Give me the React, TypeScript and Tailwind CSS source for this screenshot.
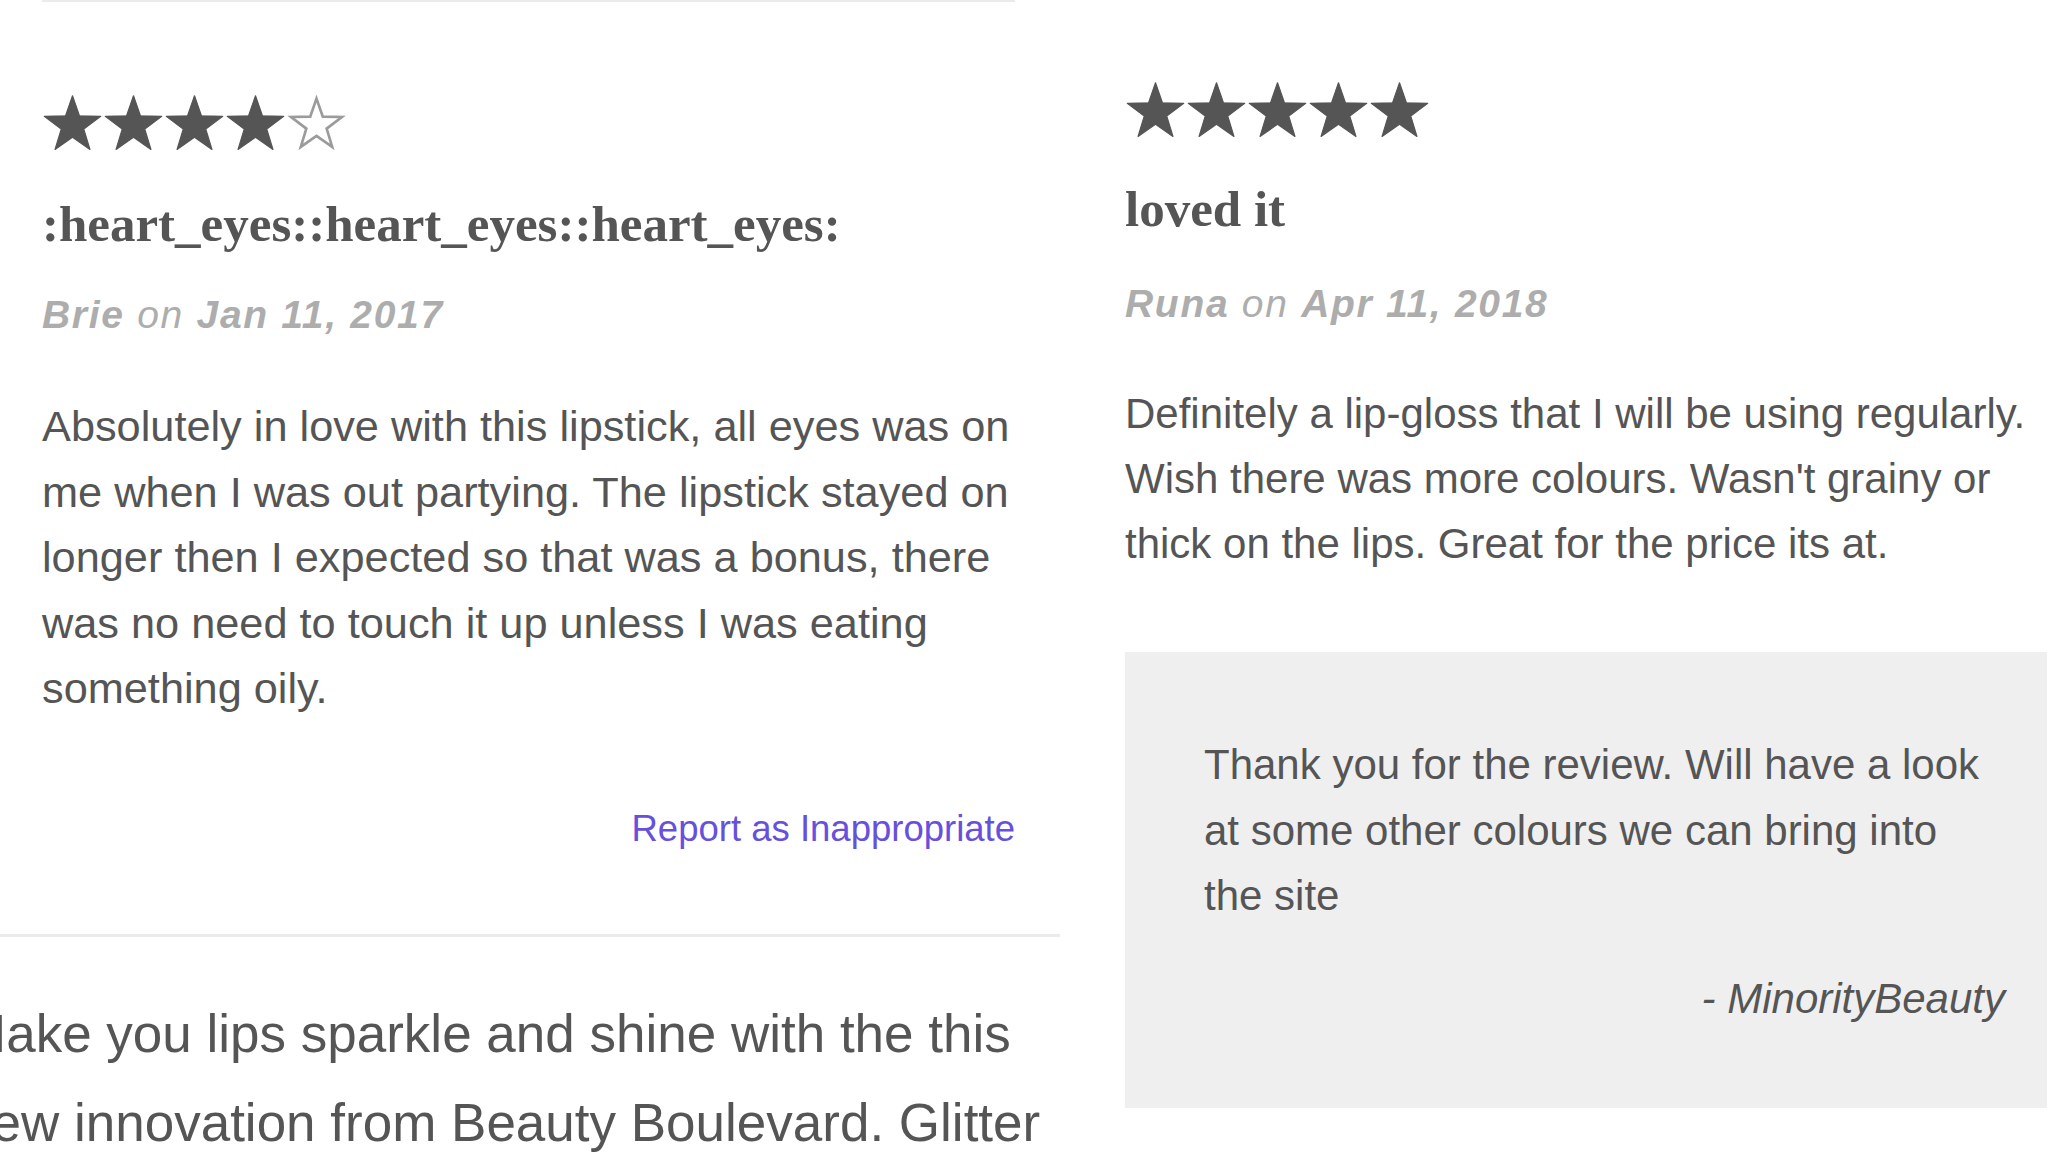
import React from "react"

// Product review listing, two review columns side by side
type Review = {
  id: number
  rating: number
  title: string
  author: string
  date: string
  body: string
}

const reviews: Review[] = [
  {
    id: 1,
    rating: 4,
    title: ":heart_eyes::heart_eyes::heart_eyes:",
    author: "Brie",
    date: "Jan 11, 2017",
    body: "Absolutely in love with this lipstick, all eyes was on me when I was out partying. The lipstick stayed on longer then I expected so that was a bonus, there was no need to touch it up unless I was eating something oily.",
  },
  {
    id: 2,
    rating: 5,
    title: "loved it",
    author: "Runa",
    date: "Apr 11, 2018",
    body: "Definitely a lip-gloss that I will be using regularly. Wish there was more colours. Wasn't grainy or thick on the lips. Great for the price its at.",
  },
]

const STAR = "50,3 61.76,36.82 97.55,37.55 69.02,59.18 79.39,93.45 50,73 20.61,93.45 30.98,59.18 2.45,37.55 38.24,36.82"

function Star({ filled }: { filled: boolean }) {
  return (
    <svg viewBox="0 0 100 96" className="w-[61px] h-[57px] shrink-0">
      {filled ? (
        <polygon points={STAR} fill="#555555" stroke="#555555" strokeWidth="2" strokeLinejoin="round" />
      ) : (
        <polygon points={STAR} fill="none" stroke="#9b9b9b" strokeWidth="5" strokeLinejoin="miter" transform="translate(5 5) scale(0.9)" />
      )}
    </svg>
  )
}

function Stars({ rating }: { rating: number }) {
  return (
    <div className="flex">
      {[1, 2, 3, 4, 5].map((n) => (
        <Star key={n} filled={n <= rating} />
      ))}
    </div>
  )
}

function Meta({ author, date }: { author: string; date: string }) {
  return (
    <p className="text-[39px] leading-[48px] italic tracking-[1.7px] text-[#adadad] whitespace-nowrap">
      <span className="font-bold">{author}</span> on <span className="font-bold">{date}</span>
    </p>
  )
}

export default function App() {
  const [first, second] = reviews

  return (
    <div className="w-[2048px] h-[1152px] overflow-hidden bg-white flex items-start font-['Liberation_Sans',Arial,sans-serif] text-[#555555]">
      {/* Left column */}
      <div className="w-[1060px] shrink-0 flex flex-col">
        <div className="pl-[42px] pr-[45px] flex flex-col shrink-0">
          <div className="h-[2px] shrink-0 bg-[#ebebeb]" />

          <div className="mt-[92px]">
            <Stars rating={first.rating} />
          </div>

          <h3 className="mt-[43px] font-['Liberation_Serif',serif] font-bold text-[51px] leading-[60px] text-[#555555] whitespace-nowrap">
            {first.title}
          </h3>

          <div className="mt-[37px]">
            <Meta author={first.author} date={first.date} />
          </div>

          <p className="mt-[55px] text-[43.3px] leading-[65.5px]">{first.body}</p>

          <div className="mt-[85px] flex justify-end">
            <a href="#" className="text-[36.5px] leading-[44px] text-[#6650dc]">
              Report as Inappropriate
            </a>
          </div>
        </div>

        <div className="mt-[83px] h-[3px] shrink-0 bg-[#ebebeb]" />

        {/* Product description, partly scrolled off the left edge */}
        <p className="mt-[52px] shrink-0 -ml-[38px] w-[1100px] text-[53px] leading-[89px]">
          Make you lips sparkle and shine with the this new innovation from Beauty Boulevard. Glitter lipsticks that
          last all day long.
        </p>
      </div>

      {/* Right column */}
      <div className="ml-[65px] w-[922px] shrink-0 flex flex-col">
        <div className="mt-[81px]">
          <Stars rating={second.rating} />
        </div>

        <h3 className="mt-[41px] font-['Liberation_Serif',serif] font-bold text-[51px] leading-[60px] text-[#555555]">
          {second.title}
        </h3>

        <div className="mt-[41px]">
          <Meta author={second.author} date={second.date} />
        </div>

        <p className="mt-[53px] text-[42px] leading-[65px]">{second.body}</p>

        {/* Store reply */}
        <div className="mt-[76px] shrink-0 bg-[#efefef] pl-[79px] pr-[42px] pt-[80px] pb-[77px]">
          <p className="w-[790px] text-[42px] leading-[65.5px]">
            Thank you for the review. Will have a look at some other colours we can bring into the site
          </p>
          <p className="mt-[37px] text-right text-[42px] leading-[65.5px] italic">- MinorityBeauty</p>
        </div>
      </div>
    </div>
  )
}
